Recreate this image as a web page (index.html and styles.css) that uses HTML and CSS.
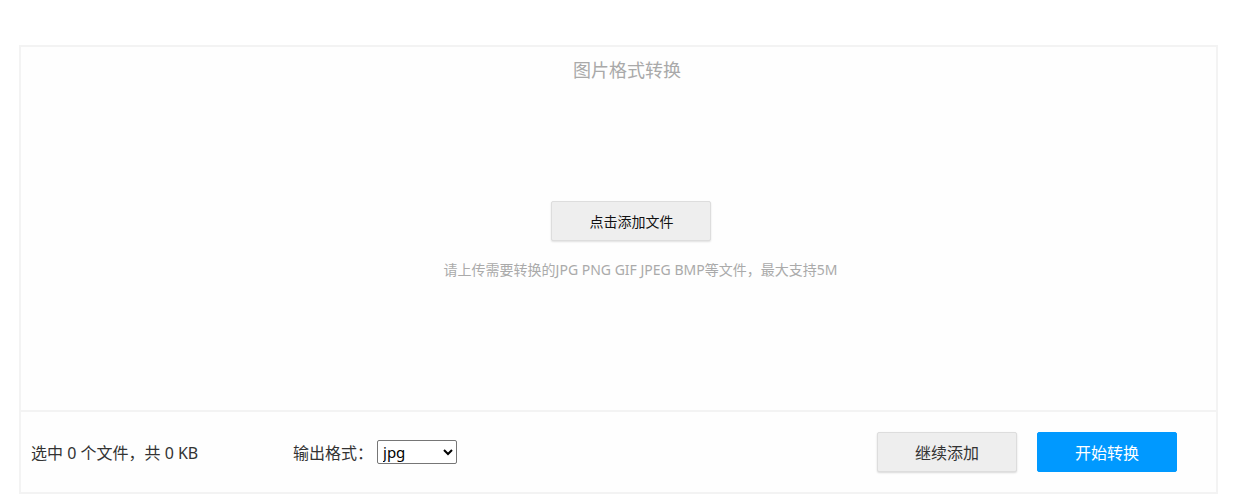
FILE: index.html
```html
<!DOCTYPE html>
<html lang="zh-CN">
<head>
<meta charset="utf-8">
<title>图片格式转换</title>
<link rel="stylesheet" href="styles.css">
</head>
<body>
<div class="panel">
  <div class="upload">
    <h1 class="title">图片格式转换</h1>
    <div class="drop">
      <button class="btn-add" type="button">点击添加文件</button>
      <p class="hint">请上传需要转换的JPG PNG GIF JPEG BMP等文件，最大支持5M</p>
    </div>
  </div>
  <div class="footer">
    <span class="count">选中 0 个文件，共 0 KB</span>
    <label class="format">输出格式：<select class="fmt-select"><option>jpg</option><option>png</option><option>gif</option><option>bmp</option></select></label>
    <div class="actions">
      <button class="btn btn-more" type="button">继续添加</button>
      <button class="btn btn-start" type="button">开始转换</button>
    </div>
  </div>
</div>
</body>
</html>
```

FILE: styles.css
```css
* { box-sizing: border-box; }
body {
  margin: 0;
  background: #ffffff;
  font-family: "Noto Sans", "Noto Sans CJK SC", sans-serif;
  color: #333;
}
.panel {
  margin: 45px 0 0 19px;
  width: 1199px;
  border: 2px solid #f3f3f3;
  background: #fefefe;
}
.upload {
  height: 365px;
  border-bottom: 2px solid #f3f3f3;
  display: flex;
  flex-direction: column;
  align-items: center;
}
.title {
  margin: 10px 0 0 17px;
  font-size: 18px;
  line-height: 26px;
  font-weight: normal;
  color: #a9a9a9;
}
.drop {
  margin-top: 118px;
  display: flex;
  flex-direction: column;
  align-items: center;
}
.btn-add {
  margin-left: 26px;
  width: 160px;
  height: 40px;
  background: #eeeeee;
  border: 1px solid #dddddd;
  border-radius: 2px;
  box-shadow: 0 1px 2px rgba(0,0,0,0.12);
  font-family: inherit;
  font-size: 14px;
  color: #111;
  cursor: pointer;
}
.hint {
  margin: 19px 0 0 44px;
  font-size: 14px;
  line-height: 20px;
  color: #aaaaaa;
}
.footer {
  height: 80px;
  display: flex;
  align-items: center;
  padding: 0 0 0 10px;
  font-size: 16px;
  color: #333;
}
.count {
  width: 262px;
}
.format {
  display: flex;
  align-items: center;
  gap: 4px;
}
.fmt-select {
  width: 80px;
  height: 24px;
  font-size: 15px;
  font-family: inherit;
  border: 1px solid #767676;
  border-radius: 2px;
  background: #fff;
  color: #000;
  padding: 0 1px;
}
.actions {
  margin-left: auto;
  margin-right: 39px;
  display: flex;
  gap: 20px;
}
.btn {
  width: 140px;
  height: 40px;
  border-radius: 2px;
  font-family: inherit;
  font-size: 16px;
  cursor: pointer;
}
.btn-more {
  background: #eeeeee;
  border: 1px solid #dddddd;
  box-shadow: 0 1px 2px rgba(0,0,0,0.15);
  color: #333;
}
.btn-start {
  background: #0099ff;
  border: 1px solid #0099ff;
  color: #fff;
}
```
